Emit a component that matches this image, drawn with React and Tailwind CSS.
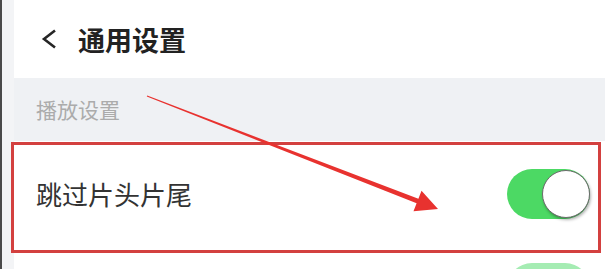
import React from 'react';

const FONT = { fontFamily: '"Noto Sans CJK SC", "Noto Sans", sans-serif' };

const Toggle = ({ on = true }) => (
  <div className={`relative w-[83px] h-[50px] rounded-full ${on ? 'bg-[#4cd964]' : 'bg-[#e5e5ea]'}`}>
    <div className="absolute right-0 top-[1px] w-[48px] h-[48px] rounded-full bg-white border border-[#6b6b6b] shadow-[1px_2px_3px_rgba(0,0,0,0.3)]" />
  </div>
);

const Arrow = () => (
  <svg className="absolute left-0 top-0 pointer-events-none" width="605" height="269" viewBox="0 0 605 269">
    <polygon
      points="147.2,95.5 418.4,198.7 421.5,190.7 438,209 413.5,211.3 416.6,203.3 146.8,96.5"
      fill="#e8322f"
    />
  </svg>
);

const App = () => {
  return (
    <div className="relative w-[605px] h-[269px] overflow-hidden flex bg-[#f2f3f5]" style={FONT}>
      <div className="w-[2px] bg-[#4a4a4a]" />
      <div className="w-[12px] bg-[#f3f4f6]" />

      <div className="flex-1 flex flex-col min-h-0">
        <div className="shrink-0 h-[78px] bg-white flex items-center pl-[27px] gap-[21px]">
          <svg width="16" height="20" viewBox="0 0 16 20">
            <polyline points="14,1.5 3,10 14,18.5" fill="none" stroke="#262626" strokeWidth="2.6" />
          </svg>
          <span className="text-[27px] font-bold text-[#222] leading-none">通用设置</span>
        </div>

        <div className="shrink-0 h-[63px] bg-[#eff1f4] flex items-center pl-[22px]">
          <span className="text-[21px] text-[#ababab] leading-none">播放设置</span>
        </div>

        <div className="shrink-0 h-[106px] bg-white flex items-center justify-between pl-[22px] pr-[15px]">
          <span className="text-[26px] text-[#333] leading-none">跳过片头片尾</span>
          <Toggle />
        </div>

        <div className="shrink-0 h-[80px] bg-white flex justify-end pr-[15px] pt-[16px]">
          <div className="w-[83px] h-[50px] rounded-full bg-[#a5ecb3]" />
        </div>
      </div>

      <div className="absolute left-[11px] top-[142px] w-[590px] h-[111px] border-[3px] border-[#d3403f] pointer-events-none" />
      <Arrow />
    </div>
  );
};

export default App;
